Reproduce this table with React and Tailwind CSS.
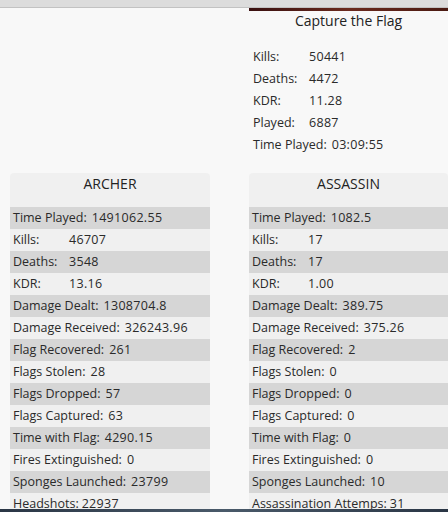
import React from "react";

const ctf = [
  ["Kills:", "50441"],
  ["Deaths:", "4472"],
  ["KDR:", "11.28"],
  ["Played:", "6887"],
  ["Time Played:", "03:09:55"],
];

const archer = [
  ["Time Played:", "1491062.55"],
  ["Kills:", "46707"],
  ["Deaths:", "3548"],
  ["KDR:", "13.16"],
  ["Damage Dealt:", "1308704.8"],
  ["Damage Received:", "326243.96"],
  ["Flag Recovered:", "261"],
  ["Flags Stolen:", "28"],
  ["Flags Dropped:", "57"],
  ["Flags Captured:", "63"],
  ["Time with Flag:", "4290.15"],
  ["Fires Extinguished:", "0"],
  ["Sponges Launched:", "23799"],
  ["Headshots:", "22937", true],
];

const assassin = [
  ["Time Played:", "1082.5"],
  ["Kills:", "17"],
  ["Deaths:", "17"],
  ["KDR:", "1.00"],
  ["Damage Dealt:", "389.75"],
  ["Damage Received:", "375.26"],
  ["Flag Recovered:", "2"],
  ["Flags Stolen:", "0"],
  ["Flags Dropped:", "0"],
  ["Flags Captured:", "0"],
  ["Time with Flag:", "0"],
  ["Fires Extinguished:", "0"],
  ["Sponges Launched:", "10"],
  ["Assassination Attemps:", "31", true],
];

function Row({ label, value, tight }) {
  return (
    <div className="flex h-[22px] items-center whitespace-nowrap">
      <span className={tight ? "mr-[3px]" : "inline-block min-w-[51px] mr-[5px]"}>{label}</span>
      <span className="tracking-[0.3px]">{value}</span>
    </div>
  );
}

function Card({ title, rows }) {
  return (
    <div className="flex flex-col">
      <div className="h-[34px] rounded-t-[4px] bg-[#f0f0f0] text-center text-[14px] leading-[22px] text-[#222]">
        {title}
      </div>
      {rows.map(([l, v, t], i) => (
        <div key={l} className={`px-[3px] ${i % 2 === 0 ? "bg-[#d6d6d6]" : "bg-[#f0f0f0]"}`}>
          <Row label={l} value={v} tight={t} />
        </div>
      ))}
    </div>
  );
}

export default function App() {
  return (
    <div
      className="flex h-[512px] w-[448px] flex-col overflow-hidden bg-[#f8f8f8] text-[12.5px] text-[#2a2a2a]"
      style={{ fontFamily: '"Open Sans", "Noto Sans", sans-serif' }}
    >
      <div className="h-[8px] shrink-0 border-b border-[#c2c2c2] bg-[#dcdcdc]" />
      <div className="min-h-0 flex-1 overflow-hidden">
        <div className="grid grid-cols-[200px_1fr] gap-x-[39px] pl-[10px]">
          <div />
          <div className="flex flex-col">
            <div className="h-[3px] bg-gradient-to-r from-[#3a1010] via-[#6b2a1e] to-[#4a1a12]" />
            <div className="h-[20px] text-center text-[14px] leading-[20px] text-[#222]">Capture the Flag</div>
            <div className="mt-[15px] flex flex-col px-[4px]">
              {ctf.map(([l, v]) => (
                <Row key={l} label={l} value={v} />
              ))}
            </div>
          </div>
          <div className="mt-[17px]">
            <Card title="ARCHER" rows={archer} />
          </div>
          <div className="mt-[17px]">
            <Card title="ASSASSIN" rows={assassin} />
          </div>
        </div>
      </div>
      <div className="h-[3px] shrink-0 bg-gradient-to-r from-[#2a3645] via-[#4a5a6a] to-[#2a3645]" />
    </div>
  );
}
